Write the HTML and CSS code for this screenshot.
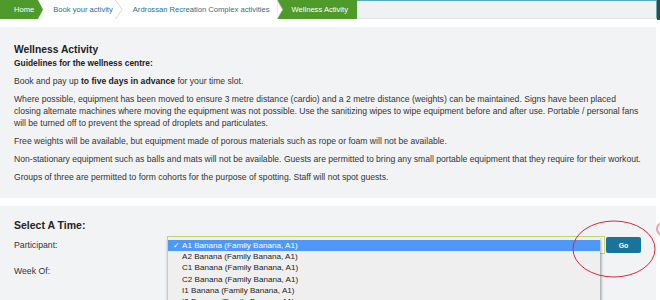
FILE: index.html
```html
<!DOCTYPE html>
<html>
<head>
<meta charset="utf-8">
<link rel="stylesheet" href="styles.css">
</head>
<body>
<div class="page">
  <div class="topline">
    <nav class="crumbs">
      <a class="crumb crumb-green crumb-home">Home</a>
      <svg class="sep" width="5" height="19" viewBox="0 0 5 19"><rect width="5" height="19" fill="#fff"/><polygon points="0,0 5,9.5 0,19" fill="#4e9b2b"/></svg>
      <a class="crumb crumb-book">Book your activity</a>
      <svg class="sep" width="8" height="19" viewBox="0 0 8 19"><rect width="8" height="19" fill="#fff"/><polyline points="0.5,0 7,9.5 0.5,19" fill="none" stroke="#d6d9dc" stroke-width="1"/></svg>
      <a class="crumb crumb-complex">Ardrossan Recreation Complex activities</a>
      <svg class="sep" width="6" height="19" viewBox="0 0 6 19"><rect width="6" height="19" fill="#4e9b2b"/><polygon points="0,0 5.5,9.5 0,19" fill="#fff" stroke="#d6d9dc" stroke-width="0.8"/></svg>
      <span class="crumb crumb-green crumb-current">Wellness Activity</span>
      <span class="crumb-fill"></span>
    </nav>
    <div class="edge"></div>
  </div>

  <section class="panel info">
    <h2 class="title">Wellness Activity</h2>
    <h3 class="subtitle">Guidelines for the wellness centre:</h3>
    <p>Book and pay up <strong>to five days in advance</strong> for your time slot.</p>
    <p>Where possible, equipment has been moved to ensure 3 metre distance (cardio) and a 2 metre distance (weights) can be maintained. Signs have been placed<br>closing alternate machines where moving the equipment was not possible. Use the sanitizing wipes to wipe equipment before and after use. Portable / personal fans<br>will be turned off to prevent the spread of droplets and particulates.</p>
    <p>Free weights will be available, but equipment made of porous materials such as rope or foam will not be available.</p>
    <p>Non-stationary equipment such as balls and mats will not be available. Guests are permitted to bring any small portable equipment that they require for their workout.</p>
    <p>Groups of three are permitted to form cohorts for the purpose of spotting. Staff will not spot guests.</p>
  </section>

  <section class="panel picker">
    <h2 class="title">Select A Time:</h2>
    <div class="row">
      <span class="label">Participant:</span>
      <div class="selectbox">
        <ul class="options">
          <li class="opt opt-selected"><span class="check">✓</span>A1 Banana (Family Banana, A1)</li>
          <li class="opt"><span class="check"></span>A2 Banana (Family Banana, A1)</li>
          <li class="opt"><span class="check"></span>C1 Banana (Family Banana, A1)</li>
          <li class="opt"><span class="check"></span>C2 Banana (Family Banana, A1)</li>
          <li class="opt"><span class="check"></span>I1 Banana (Family Banana, A1)</li>
          <li class="opt"><span class="check"></span>I2 Banana (Family Banana, A1)</li>
        </ul>
      </div>
      <button class="go">Go</button>
    </div>
    <div class="row row-week">
      <span class="label">Week Of:</span>
      <div class="weekbox"></div>
    </div>
  </section>

  <svg class="annot" width="660" height="300" viewBox="0 0 660 300">
    <ellipse cx="614" cy="249" rx="41" ry="28" fill="none" stroke="#e0253d" stroke-width="1"/>
    <ellipse cx="668" cy="229" rx="11" ry="8" fill="none" stroke="#f2a0aa" stroke-width="2"/>
  </svg>
</div>
</body>
</html>
```

FILE: styles.css
```css
html, body {
  margin: 0;
  padding: 0;
  background: #fff;
  overflow: hidden;
}

body {
  font-family: "Liberation Sans", Arial, Helvetica, sans-serif;
  color: #333;
}

.page {
  position: relative;
  width: 660px;
  height: 300px;
  overflow: hidden;
}

.topline {
  display: flex;
  height: 20px;
}

.crumbs {
  display: flex;
  flex: 1;
  height: 19px;
  font-size: 7.6px;
  line-height: 19px;
}

.sep {
  display: block;
  flex: none;
}

.crumb {
  display: block;
  flex: none;
  background: #fff;
  color: #2c6f8f;
  text-decoration: none;
  white-space: nowrap;
}

.crumb-green {
  background: #4e9b2b;
  color: #fff;
}

.crumb-home {
  padding: 0 4px 0 14px;
}

.crumb-book {
  padding: 0 2px 0 10px;
}

.crumb-complex {
  padding: 0 7px 0 10px;
}

.crumb-current {
  padding: 0 9px 0 9px;
}

.crumb-fill {
  flex: 1;
  box-sizing: border-box;
  height: 19px;
  background: #f0f1f3;
  border-top: 1px solid #5aa8c3;
  border-right: 1px solid #5aa8c3;
  border-bottom: 1px solid #e2e4e7;
}

.edge {
  width: 3px;
  height: 20px;
  background: #3e4b36;
}

.panel {
  width: 656px;
  box-sizing: border-box;
  background: #f2f3f5;
  padding: 0 4px 0 14px;
}

.info {
  margin-top: 7px;
  padding-top: 16px;
  padding-bottom: 15px;
}

.title {
  margin: 0;
  font-size: 10.3px;
  line-height: 13px;
  font-weight: bold;
  color: #222;
}

.subtitle {
  margin: 1px 0 6px;
  font-size: 8.4px;
  line-height: 12px;
  font-weight: bold;
  color: #222;
}

.info p {
  margin: 0 0 6px;
  font-size: 8.6px;
  line-height: 12px;
}

.info p:last-child {
  margin-bottom: 0;
}

.info strong {
  color: #222;
}

.picker {
  margin-top: 8px;
  padding-top: 13px;
  height: 120px;
}

.picker .title {
  font-size: 10.5px;
}

.row {
  display: flex;
  align-items: center;
  height: 18px;
  margin-top: 4px;
}

.row-week {
  margin-top: 8px;
}

.label {
  width: 153px;
  flex: none;
  font-size: 8.7px;
  line-height: 12px;
}

.selectbox {
  position: relative;
  width: 438px;
  height: 18px;
  box-sizing: border-box;
  border: 1px solid #c4d873;
  background: #fff;
}

.weekbox {
  width: 438px;
  height: 18px;
}

.options {
  position: absolute;
  left: -1px;
  top: 1px;
  width: 432px;
  margin: 0;
  padding: 2px 0 4px;
  list-style: none;
  background: #efefef;
  border-left: 1px solid #c9c9c9;
  box-shadow: 1px 1px 3px rgba(0, 0, 0, 0.4);
  z-index: 2;
}

.opt {
  display: flex;
  height: 11.2px;
  line-height: 11.6px;
  font-size: 8.1px;
  color: #222;
  padding-left: 5px;
  white-space: nowrap;
}

.opt-selected {
  background: #4f98f7;
  color: #fff;
}

.check {
  display: inline-block;
  width: 9px;
  flex: none;
}

.go {
  margin-left: 1px;
  width: 35px;
  height: 16px;
  padding: 0;
  border: none;
  border-radius: 2px;
  background: #19739a;
  color: #fff;
  font-family: "Liberation Sans", Arial, sans-serif;
  font-size: 7px;
  font-weight: bold;
}

.annot {
  position: absolute;
  left: 0;
  top: 0;
  pointer-events: none;
  z-index: 5;
}
```
